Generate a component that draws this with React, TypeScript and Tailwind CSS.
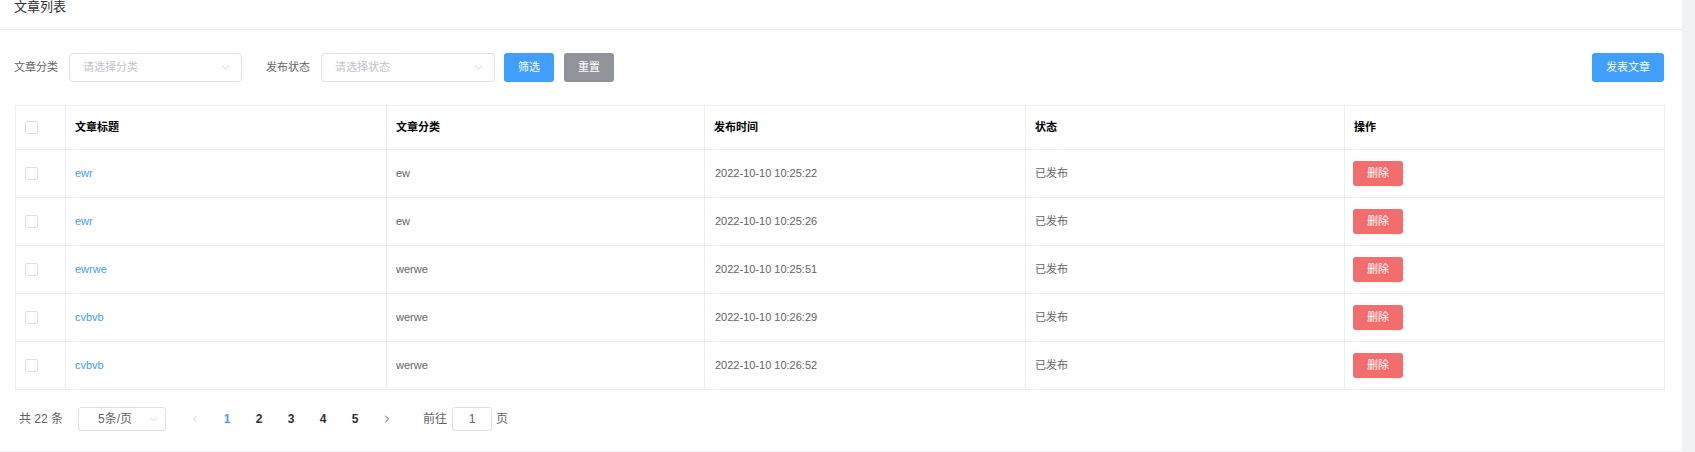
import { ChevronDown, ChevronLeft, ChevronRight } from 'lucide-react';

const rows = [
  { title: 'ewr', category: 'ew', time: '2022-10-10 10:25:22', status: '已发布' },
  { title: 'ewr', category: 'ew', time: '2022-10-10 10:25:26', status: '已发布' },
  { title: 'ewrwe', category: 'werwe', time: '2022-10-10 10:25:51', status: '已发布' },
  { title: 'cvbvb', category: 'werwe', time: '2022-10-10 10:26:29', status: '已发布' },
  { title: 'cvbvb', category: 'werwe', time: '2022-10-10 10:26:52', status: '已发布' },
];

const font = { fontFamily: '"Liberation Sans", "Noto Sans CJK SC", sans-serif' };

function Select({ placeholder, width }: { placeholder: string; width: string }) {
  return (
    <div className={`${width} h-[29px] flex items-center justify-between border border-[#dcdfe6] rounded-[4px] pl-[13px] pr-[9px] bg-white`}>
      <span className="text-[11px] text-[#c0c4cc]">{placeholder}</span>
      <ChevronDown className="w-[13px] h-[13px] text-[#c0c4cc]" strokeWidth={1.5} />
    </div>
  );
}

function Checkbox() {
  return <div className="w-[13px] h-[13px] border border-[#dcdfe6] rounded-[2px] bg-white" />;
}

export default function App() {
  return (
    <div className="w-[1695px] h-[452px] bg-[#f0f2f5] flex overflow-hidden" style={font}>
      <div className="w-[1682px] h-[451px] bg-white flex flex-col">
        {/* header */}
        <div className="h-[30px] border-b border-[#ebeef5] px-[14px]">
          <div className="text-[13px] leading-[14px] text-[#303133]">文章列表</div>
        </div>

        {/* filters */}
        <div className="mt-[23px] h-[29px] flex items-center pl-[14px] pr-[18px]">
          <span className="text-[11px] text-[#606266] mr-[11px]">文章分类</span>
          <Select placeholder="请选择分类" width="w-[173px]" />
          <span className="text-[11px] text-[#606266] ml-[24px] mr-[11px]">发布状态</span>
          <Select placeholder="请选择状态" width="w-[174px]" />
          <button className="ml-[9px] w-[50px] h-[29px] rounded-[3px] bg-[#409eff] text-white text-[11px]">筛选</button>
          <button className="ml-[10px] w-[50px] h-[29px] rounded-[3px] bg-[#909399] text-white text-[11px]">重置</button>
          <div className="flex-1" />
          <button className="w-[72px] h-[29px] rounded-[3px] bg-[#409eff] text-white text-[11px]">发表文章</button>
        </div>

        {/* table */}
        <div className="mt-[23px] pl-[15px] pr-[18px]">
          <table className="w-[1649px] table-fixed border-collapse text-[11px]">
            <colgroup>
              <col className="w-[50px]" />
              <col className="w-[321px]" />
              <col className="w-[318px]" />
              <col className="w-[321px]" />
              <col className="w-[319px]" />
              <col className="w-[320px]" />
            </colgroup>
            <thead>
              <tr className="h-[44px]">
                <th className="border border-[#ebeef5] pl-[9px] text-left font-normal">
                  <Checkbox />
                </th>
                {['文章标题', '文章分类', '发布时间', '状态', '操作'].map((h) => (
                  <th key={h} className="border border-[#ebeef5] pl-[9px] text-left font-bold text-[#000]">
                    {h}
                  </th>
                ))}
              </tr>
            </thead>
            <tbody>
              {rows.map((r, i) => (
                <tr key={i} className="h-[48px]">
                  <td className="border border-[#ebeef5] pl-[9px]">
                    <Checkbox />
                  </td>
                  <td className="border border-[#ebeef5] pl-[9px] text-[#409eff]">{r.title}</td>
                  <td className="border border-[#ebeef5] pl-[9px] text-[#606266]">{r.category}</td>
                  <td className="border border-[#ebeef5] pl-[10px] text-[#606266]">{r.time}</td>
                  <td className="border border-[#ebeef5] pl-[9px] text-[#606266]">{r.status}</td>
                  <td className="border border-[#ebeef5] pl-[8px]">
                    <button className="w-[50px] h-[25px] rounded-[3px] bg-[#f56c6c] text-white text-[11px]">删除</button>
                  </td>
                </tr>
              ))}
            </tbody>
          </table>
        </div>

        {/* pagination */}
        <div className="mt-[17px] h-[24px] flex items-center pl-[19px] text-[12px] text-[#606266]">
          <span className="w-[59px]">共 22 条</span>
          <div className="w-[88px] h-[24px] border border-[#dcdfe6] rounded-[3px] flex items-center justify-between pl-[19px] pr-[6px]">
            <span className="text-[#606266]">5条/页</span>
            <ChevronDown className="w-[11px] h-[11px] text-[#c0c4cc]" strokeWidth={1.5} />
          </div>
          <div className="ml-[13px] w-[32px] flex justify-center">
            <ChevronLeft className="w-[12px] h-[12px] text-[#c0c4cc]" strokeWidth={1.5} />
          </div>
          {[1, 2, 3, 4, 5].map((n) => (
            <span
              key={n}
              className={`w-[32px] text-center font-bold ${n === 1 ? 'text-[#409eff]' : 'text-[#303133]'}`}
            >
              {n}
            </span>
          ))}
          <div className="w-[32px] flex justify-center">
            <ChevronRight className="w-[12px] h-[12px] text-[#303133]" strokeWidth={1.5} />
          </div>
          <span className="ml-[20px] mr-[5px]">前往</span>
          <div className="w-[40px] h-[24px] border border-[#dcdfe6] rounded-[3px] flex items-center justify-center text-[#606266]">
            1
          </div>
          <span className="ml-[4px]">页</span>
        </div>
      </div>
    </div>
  );
}
